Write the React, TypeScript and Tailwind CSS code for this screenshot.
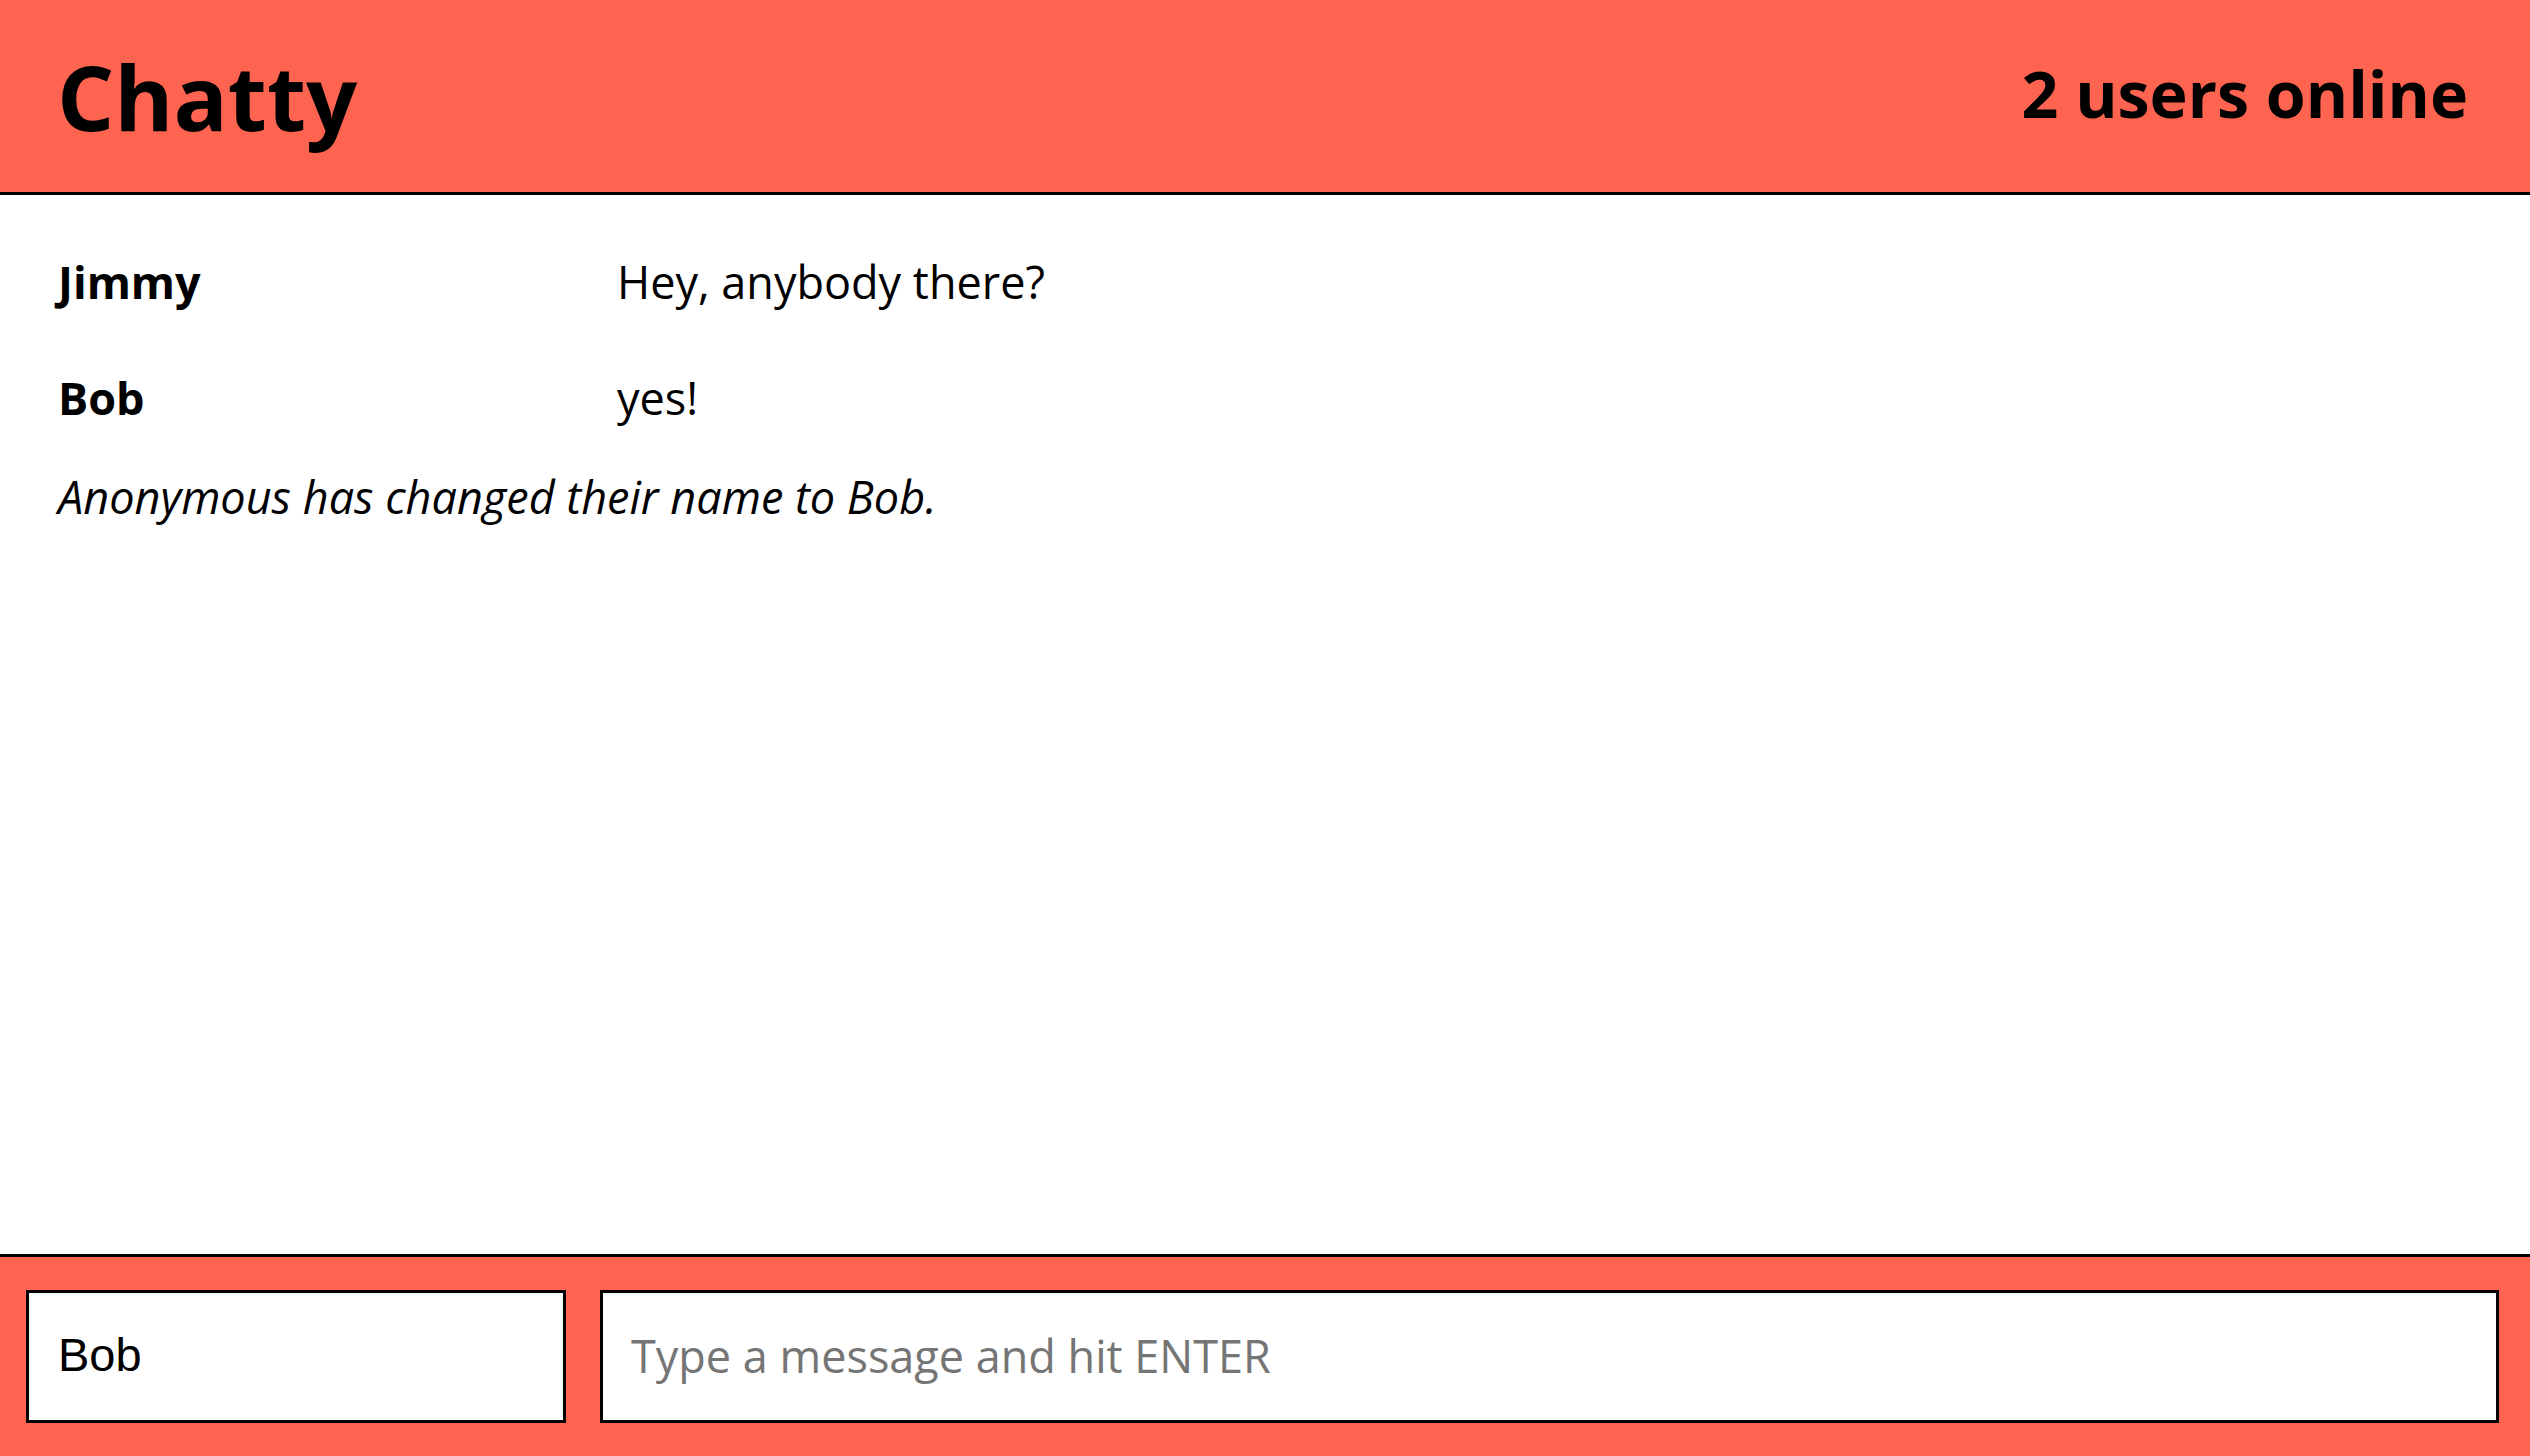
import React from "react";

type Row =
  | { kind: "message"; username: string; content: string }
  | { kind: "notification"; content: string };

const rows: Row[] = [
  { kind: "message", username: "Jimmy", content: "Hey, anybody there?" },
  { kind: "message", username: "Bob", content: "yes!" },
  { kind: "notification", content: "Anonymous has changed their name to Bob." },
];

export default function App() {
  return (
    <div className="flex h-[1456px] flex-col bg-white font-['Open_Sans',sans-serif] text-black">
      <header className="flex h-[195px] shrink-0 items-center justify-between border-b-[3px] border-black bg-[#ff6450] pl-[57px] pr-[62px]">
        <h1 className="text-[90px] font-bold leading-none">Chatty</h1>
        <span className="pb-[5px] text-[64.5px] font-bold leading-none">2 users online</span>
      </header>

      <main className="flex-1 pl-[58px] pt-[29px]">
        {rows.map((row, i) =>
          row.kind === "message" ? (
            <div key={i} className="flex py-[25px] text-[45px] leading-[66px]">
              <span className="w-[559px] shrink-0 font-bold">{row.username}</span>
              <span>{row.content}</span>
            </div>
          ) : (
            <div key={i} className="mt-[8px] text-[45px] italic leading-[66px]">
              {row.content}
            </div>
          )
        )}
      </main>

      <footer className="flex h-[202px] shrink-0 gap-[34px] border-t-[3px] border-black bg-[#ff6450] pb-[33px] pl-[26px] pr-[31px] pt-[33px]">
        <input
          defaultValue="Bob"
          className="h-[133px] w-[540px] shrink-0 border-[3px] border-black bg-white px-[29px] pb-[4px] font-['Liberation_Sans',sans-serif] text-[47px] text-black outline-none"
        />
        <input
          placeholder="Type a message and hit ENTER"
          className="h-[133px] min-w-0 flex-1 border-[3px] border-black bg-white pb-[3px] pl-[28px] pr-[27px] font-['Open_Sans',sans-serif] text-[45px] text-black outline-none placeholder:text-[#757575]"
        />
      </footer>
    </div>
  );
}
